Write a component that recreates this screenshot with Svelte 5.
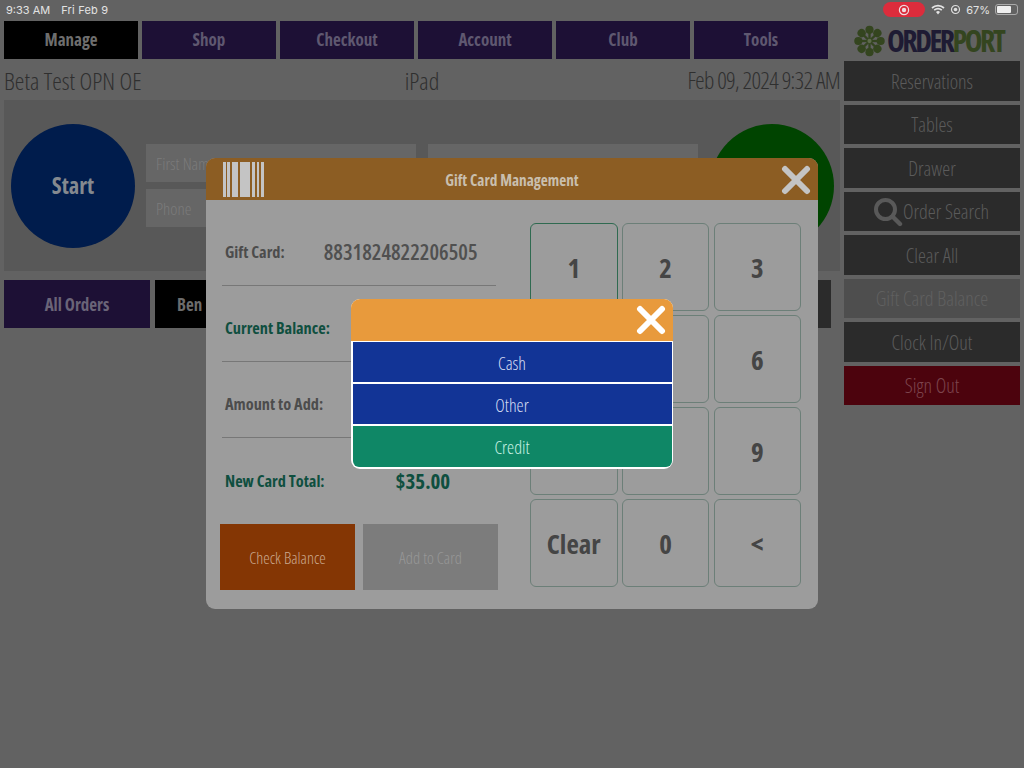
<script>
  const navItems = ['Manage', 'Shop', 'Checkout', 'Account', 'Club', 'Tools'];
  const sideItems = ['Reservations', 'Tables', 'Drawer', 'Order Search', 'Clear All', 'Gift Card Balance', 'Clock In/Out', 'Sign Out'];
  const keys = ['1', '2', '3', '4', '5', '6', '7', '8', '9', 'Clear', '0', '<'];
  const petals = [0, 45, 90, 135, 180, 225, 270, 315];
</script>

<div class="screen">
  <header class="status">
    <div class="status-left"><span>9:33 AM</span><span class="date">Fri Feb 9</span></div>
    <div class="status-right">
      <span class="rec"><svg width="12" height="12" viewBox="0 0 12 12"><circle cx="6" cy="6" r="4.6" fill="none" stroke="#f0dde0" stroke-width="1.2" /><circle cx="6" cy="6" r="2.2" fill="#f0dde0" /></svg></span>
      <svg class="wifi" width="14" height="11" viewBox="0 0 14 11">
        <path d="M1 4 A9 9 0 0 1 13 4 M3.2 6.2 A6 6 0 0 1 10.8 6.2" fill="none" stroke="#e4e4e4" stroke-width="1.7" />
        <path d="M5 8 A3 3 0 0 1 9 8 L7 10.4 Z" fill="#e4e4e4" />
      </svg>
      <svg width="11" height="11" viewBox="0 0 11 11"><circle cx="5.5" cy="5.5" r="4" fill="none" stroke="#ddd" stroke-width="1.2" /><circle cx="5.5" cy="5.5" r="1.8" fill="#ddd" /></svg>
      <span>67%</span>
      <span class="battery"><span class="battery-fill"></span></span>
    </div>
  </header>

  <div class="layout">
    <main class="left">
      <nav class="nav">
        {#each navItems as item, i}
          <div class="nav-item" class:active={i === 0}>{item}</div>
        {/each}
      </nav>

      <div class="info">
        <span>Beta Test OPN OE</span>
        <span class="device">iPad</span>
        <span class="stamp">Feb 09, 2024 9:32 AM</span>
      </div>

      <section class="panel">
        <div class="circle start">Start</div>
        <div class="fields">
          <div class="field">First Name</div>
          <div class="field">Last Name</div>
          <div class="field">Phone</div>
        </div>
        <div class="circle go"></div>
      </section>

      <div class="tabs">
        <div class="tab all">All Orders</div>
        <div class="tab ben">Ben</div>
        <div class="tab end"></div>
      </div>
    </main>

    <aside class="side">
      <div class="logo">
        <svg width="33" height="32" viewBox="-17 -16 34 32">
          {#each petals as a}
            <circle cx="0" cy="-11.5" r="4.2" fill="#34451f" transform="rotate({a})" />
            <line x1="0" y1="0" x2="0" y2="-9" stroke="#34451f" stroke-width="2.4" transform="rotate({a})" />
          {/each}
          <circle r="2.2" fill="#5d6a4c" />
        </svg>
        <span class="logo-text"><span class="order">ORDER</span><span class="port">PORT</span></span>
      </div>
      {#each sideItems as item}
        <div class="side-item" class:disabled={item === 'Gift Card Balance'} class:signout={item === 'Sign Out'}>
          {#if item === 'Order Search'}
            <svg class="search" width="30" height="30" viewBox="0 0 30 30">
              <circle cx="12.5" cy="12.5" r="9.5" fill="none" stroke="#595959" stroke-width="4" />
              <line x1="19.5" y1="19.5" x2="27" y2="27" stroke="#595959" stroke-width="4.4" stroke-linecap="round" />
            </svg>
          {/if}
          <span>{item}</span>
        </div>
      {/each}
    </aside>
  </div>

  <div class="modal">
    <div class="modal-head">
      <svg class="barcode" width="42" height="35" viewBox="0 0 42 35" fill="#c4c4c4">
        <rect x="0" width="3" height="35" /><rect x="4" width="3" height="35" /><rect x="9" width="6" height="35" />
        <rect x="17" width="10" height="35" /><rect x="29" width="3" height="35" /><rect x="34" width="2" height="35" /><rect x="38" width="3" height="35" />
      </svg>
      <span class="modal-title">Gift Card Management</span>
      <svg class="close" width="30" height="30" viewBox="0 0 30 30"><path d="M4 4 L26 26 M26 4 L4 26" stroke="#c4c4c4" stroke-width="6" stroke-linecap="round" /></svg>
    </div>
    <div class="modal-body">
      <div class="form">
        <div class="row line"><span class="label">Gift Card:</span><span class="card-no">8831824822206505</span></div>
        <div class="row line"><span class="label green">Current Balance:</span></div>
        <div class="row line"><span class="label">Amount to Add:</span></div>
        <div class="row last"><span class="label green">New Card Total:</span><span class="total">$35.00</span></div>
        <div class="actions">
          <div class="action check">Check Balance</div>
          <div class="action add">Add to Card</div>
        </div>
      </div>
      <div class="keypad">
        {#each keys as key, i}
          <div class="key" class:focus={i === 0}>{key}</div>
        {/each}
      </div>
    </div>
  </div>

  <div class="picker">
    <div class="picker-head">
      <svg width="30" height="30" viewBox="0 0 30 30"><path d="M4 4 L26 26 M26 4 L4 26" stroke="#fff" stroke-width="6" stroke-linecap="round" /></svg>
    </div>
    <div class="pick blue">Cash</div>
    <div class="pick blue">Other</div>
    <div class="pick teal">Credit</div>
  </div>
</div>

<style>
  :global(body) {
    margin: 0;
    background: #626262;
  }

  .screen {
    position: relative;
    width: 1024px;
    height: 768px;
    overflow: hidden;
    background: #626262;
    font-family: "Open Sans", "Liberation Sans", sans-serif;
    font-stretch: 75%;
  }

  .status {
    height: 21px;
    display: flex;
    justify-content: space-between;
    align-items: center;
    padding: 0 6px 2px 6px;
    box-sizing: border-box;
    font-family: Inter, Roboto, sans-serif;
    font-stretch: 100%;
    font-size: 11px;
    color: #e2e2e2;
  }

  .status-left {
    display: flex;
    gap: 11px;
  }

  .date {
    letter-spacing: 0.2px;
  }

  .status-right {
    display: flex;
    align-items: center;
    gap: 5px;
  }

  .rec {
    width: 42px;
    height: 15px;
    border-radius: 8px;
    background: #dc2c3c;
    display: flex;
    align-items: center;
    justify-content: center;
    margin-right: 1px;
  }

  .battery {
    width: 23px;
    height: 11px;
    border: 1px solid #aaa;
    border-radius: 3px;
    box-sizing: border-box;
    padding: 1px;
    display: flex;
  }

  .battery-fill {
    width: 14px;
    background: #eee;
    border-radius: 1px;
  }

  .layout {
    display: flex;
    padding-left: 4px;
  }

  .left {
    width: 836px;
  }

  .nav {
    display: flex;
    gap: 4px;
    height: 38px;
  }

  .nav-item {
    width: 134px;
    background: #1d1035;
    color: #5f5870;
    font-size: 17px;
    font-weight: 700;
    display: flex;
    align-items: center;
    justify-content: center;
    padding-bottom: 2px;
    box-sizing: border-box;
  }

  .nav-item.active {
    background: #000;
    color: #6e6e6e;
  }

  .info {
    height: 41px;
    display: grid;
    grid-template-columns: 1fr auto 1fr;
    align-items: center;
    color: #2f2f2f;
    font-size: 24.2px;
    font-weight: 300;
    padding-top: 1px;
    box-sizing: border-box;
  }

  .stamp {
    text-align: right;
    font-size: 23.5px;
    letter-spacing: -0.7px;
  }

  .panel {
    height: 171px;
    background: #585858;
    display: flex;
    align-items: center;
    padding: 0 7px;
    box-sizing: border-box;
  }

  .circle {
    width: 124px;
    height: 124px;
    border-radius: 50%;
    flex: none;
    display: flex;
    align-items: center;
    justify-content: center;
  }

  .start {
    background: #001c4c;
    color: #84898f;
    font-size: 22.5px;
    font-weight: 700;
    box-sizing: border-box;
  }

  .go {
    background: #004400;
    margin-left: 12px;
  }

  .fields {
    margin-left: 11px;
    width: 552px;
    display: grid;
    grid-template-columns: 270px 270px;
    column-gap: 12px;
    row-gap: 7px;
    margin-bottom: 1px;
  }

  .field {
    height: 38px;
    background: #666;
    color: #7b7b7b;
    font-size: 17px;
    line-height: 14px;
    font-weight: 300;
    display: flex;
    align-items: center;
    padding-left: 10px;
    padding-top: 3px;
    box-sizing: border-box;
  }

  .tabs {
    display: flex;
    margin-top: 9px;
    height: 48px;
    gap: 5px;
  }

  .tab {
    display: flex;
    align-items: center;
    justify-content: center;
    font-size: 17px;
    font-weight: 700;
    color: #6c6c6c;
  }

  .all {
    width: 146px;
    background: #1d1035;
    color: #6a6478;
  }

  .ben {
    width: 146px;
    background: #000;
    justify-content: flex-start;
    padding-left: 22px;
    box-sizing: border-box;
  }

  .end {
    margin-left: auto;
    margin-right: 9px;
    width: 100px;
    background: #2b2b2b;
  }

  .side {
    margin-left: 4px;
    width: 176px;
  }

  .logo {
    height: 40px;
    display: flex;
    align-items: center;
    gap: 1px;
    padding-left: 9px;
  }

  .logo-text {
    font-size: 30px;
    font-weight: 700;
    letter-spacing: -2.5px;
    line-height: 1;
  }

  .order {
    color: #1e1b33;
  }

  .port {
    color: #34451f;
  }

  .side-item {
    height: 39.5px;
    margin-bottom: 4px;
    padding-top: 1px;
    box-sizing: border-box;
    background: #2b2b2b;
    color: #5b5b5b;
    font-size: 20px;
    font-weight: 300;
    display: flex;
    align-items: center;
    justify-content: center;
  }

  .side-item.disabled {
    background: #4e4e4e;
    color: #606060;
  }

  .side-item.signout {
    background: #4c030d;
    color: #7d454d;
  }

  .search {
    margin-right: 0;
    margin-left: -2px;
  }

  .modal {
    position: absolute;
    left: 206px;
    top: 158px;
    width: 612px;
    height: 451px;
    background: #9c9c9c;
    border-radius: 9px;
    overflow: hidden;
  }

  .modal-head {
    height: 42px;
    background: #8c5d23;
    display: flex;
    align-items: center;
    justify-content: center;
    position: relative;
  }

  .barcode {
    position: absolute;
    left: 17px;
    top: 4px;
  }

  .close {
    position: absolute;
    right: 7px;
    top: 7px;
  }

  .modal-title {
    color: #c9bfae;
    font-size: 15.3px;
    font-weight: 700;
    padding-top: 2px;
  }

  .modal-body {
    display: flex;
    padding: 22px 17px 0 14px;
  }

  .form {
    width: 278px;
    margin-top: -12px;
    flex: none;
  }

  .row {
    height: 76px;
    box-sizing: border-box;
    margin: 0 2px;
    width: 274px;
    display: flex;
    align-items: center;
    padding: 8px 3px 0;
  }

  .row.line {
    border-bottom: 1px solid #777;
  }

  .row.last {
    padding-top: 10px;
  }

  .label {
    color: #4c4c4c;
    font-size: 16.3px;
    font-weight: 700;
  }

  .label.green {
    color: #0f4f3f;
  }

  .card-no {
    margin-left: 39px;
    color: #505050;
    font-size: 21.5px;
    font-weight: 600;
  }

  .total {
    margin-left: 71px;
    color: #0f4f3f;
    font-size: 21px;
    font-weight: 700;
  }

  .actions {
    display: flex;
    gap: 8px;
    margin-top: 10px;
  }

  .action {
    width: 135px;
    height: 66px;
    display: flex;
    align-items: center;
    justify-content: center;
    font-size: 16.4px;
    font-weight: 300;
  }

  .check {
    background: #843604;
    color: #cba98f;
  }

  .add {
    background: #7c7c7c;
    color: #979797;
  }

  .keypad {
    margin-left: 32px;
    margin-top: 1px;
    display: grid;
    grid-template-columns: repeat(3, 87.5px);
    grid-auto-rows: 88px;
    gap: 4px 4.25px;
  }

  .key {
    border: 1px solid #6c7f78;
    border-radius: 6px;
    box-sizing: border-box;
    display: flex;
    align-items: center;
    justify-content: center;
    color: #454545;
    font-size: 27px;
    font-weight: 700;
  }

  .key.focus {
    border-color: #2f6a50;
  }

  .picker {
    position: absolute;
    left: 351px;
    top: 299px;
    width: 322px;
    height: 169.5px;
    background: #fff;
    border-radius: 9px;
    overflow: hidden;
    display: flex;
    flex-direction: column;
  }

  .picker-head {
    height: 42px;
    flex: none;
    background: #e89a3c;
    display: flex;
    justify-content: flex-end;
    align-items: center;
    padding-right: 7px;
    margin-bottom: 1px;
  }

  .pick {
    margin: 0 1.5px 2px;
    height: 40.2px;
    flex: none;
    padding-top: 2px;
    box-sizing: border-box;
    display: flex;
    align-items: center;
    justify-content: center;
    font-size: 18px;
    font-weight: 300;
  }

  .blue {
    background: #123496;
    color: #d5dcf2;
  }

  .teal {
    background: #0f8766;
    color: #c8f2e4;
    border-radius: 0 0 6px 6px;
  }
</style>
